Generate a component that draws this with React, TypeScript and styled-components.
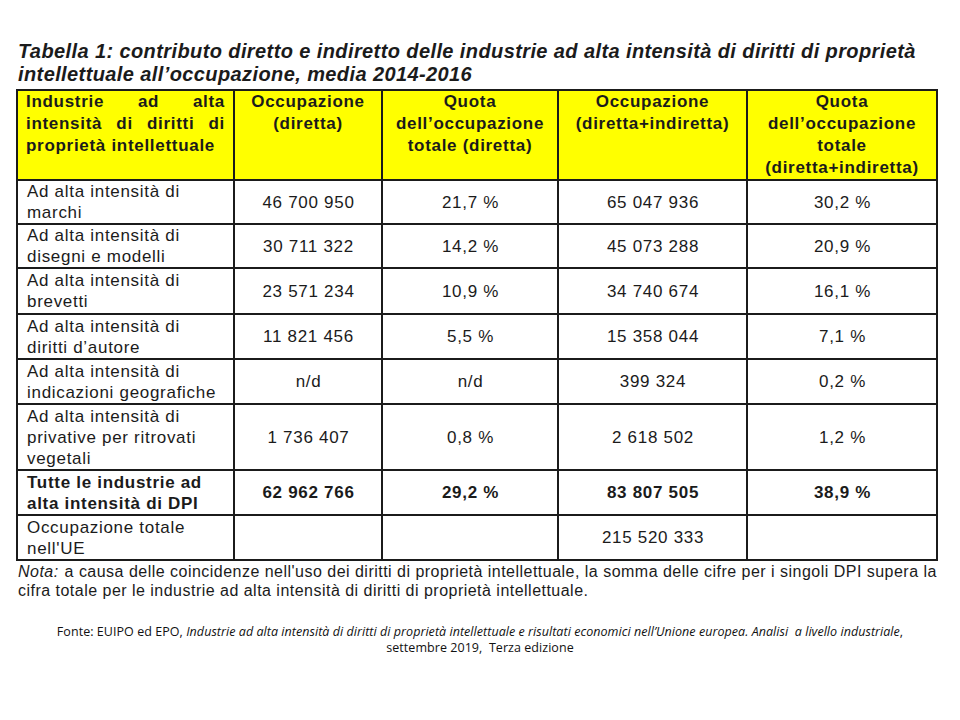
import styled, { createGlobalStyle } from 'styled-components';

const GlobalStyle = createGlobalStyle`
  html, body {
    margin: 0;
    padding: 0;
    background: #ffffff;
  }
`;

interface Row {
  label: string;
  direct: string;
  directShare: string;
  total: string;
  totalShare: string;
  bold?: boolean;
}

const rows: Row[] = [
  { label: "Ad alta intensità di marchi", direct: "46 700 950", directShare: "21,7 %", total: "65 047 936", totalShare: "30,2 %" },
  { label: "Ad alta intensità di disegni e modelli", direct: "30 711 322", directShare: "14,2 %", total: "45 073 288", totalShare: "20,9 %" },
  { label: "Ad alta intensità di brevetti", direct: "23 571 234", directShare: "10,9 %", total: "34 740 674", totalShare: "16,1 %" },
  { label: "Ad alta intensità di diritti d’autore", direct: "11 821 456", directShare: "5,5 %", total: "15 358 044", totalShare: "7,1 %" },
  { label: "Ad alta intensità di indicazioni geografiche", direct: "n/d", directShare: "n/d", total: "399 324", totalShare: "0,2 %" },
  { label: "Ad alta intensità di privative per ritrovati vegetali", direct: "1 736 407", directShare: "0,8 %", total: "2 618 502", totalShare: "1,2 %" },
  { label: "Tutte le industrie ad alta intensità di DPI", direct: "62 962 766", directShare: "29,2 %", total: "83 807 505", totalShare: "38,9 %", bold: true },
  { label: "Occupazione totale nell'UE", direct: "", directShare: "", total: "215 520 333", totalShare: "" },
];

const rowHeights = [44, 44, 46, 45, 45, 66, 45, 45];

const Page = styled.div`
  width: 960px;
  height: 720px;
  box-sizing: border-box;
  padding: 40px 0 0 16px;
  font-family: "Liberation Sans", Arial, sans-serif;
  color: #1b1b1b;
`;

const Title = styled.h1`
  margin: 0 0 3px 2px;
  font-size: 20px;
  line-height: 23px;
  font-weight: 700;
  font-style: italic;
  letter-spacing: 0.4px;
  white-space: nowrap;
`;

const Table = styled.table`
  border-collapse: collapse;
  table-layout: fixed;
  width: 920px;
  font-size: 17px;
  letter-spacing: 0.7px;
`;

const HeadCell = styled.th<{ $justify?: boolean }>`
  background: #ffff00;
  border: 2px solid #1b1b1b;
  height: 89px;
  box-sizing: border-box;
  vertical-align: top;
  padding: 0 8px;
  font-weight: 700;
  line-height: 22px;
  text-align: ${p => (p.$justify ? 'justify' : 'center')};
  text-align-last: ${p => (p.$justify ? 'left' : 'center')};
`;

const Cell = styled.td<{ $label?: boolean; $bold?: boolean }>`
  border: 2px solid #1b1b1b;
  box-sizing: border-box;
  padding: 0 8px 0 9px;
  line-height: 21px;
  font-weight: ${p => (p.$bold ? 700 : 400)};
  text-align: ${p => (p.$label ? 'left' : 'center')};
  vertical-align: middle;
`;

const Note = styled.p`
  margin: 1px 0 0 2px;
  width: 925px;
  font-size: 16px;
  line-height: 19px;
  letter-spacing: 0.48px;
`;

const NoteLabel = styled.i`
  margin-right: 1px;
`;

const Source = styled.p`
  margin: 24px 0 0 -16px;
  width: 960px;
  text-align: center;
  font-family: "Open Sans", "Liberation Sans", sans-serif;
  font-size: 12.5px;
  line-height: 16px;
  letter-spacing: 0.05px;
  color: #111;
`;

const App = () => {
  return (
    <>
      <GlobalStyle />
      <Page>
        <Title>
          Tabella 1: contributo diretto e indiretto delle industrie ad alta intensità di diritti di proprietà
          <br />
          intellettuale all’occupazione, media 2014-2016
        </Title>
        <Table>
          <colgroup>
            <col style={{ width: 217 }} />
            <col style={{ width: 148 }} />
            <col style={{ width: 176 }} />
            <col style={{ width: 189 }} />
            <col style={{ width: 190 }} />
          </colgroup>
          <thead>
            <tr>
              <HeadCell $justify>Industrie ad alta intensità di diritti di proprietà intellettuale</HeadCell>
              <HeadCell>Occupazione (diretta)</HeadCell>
              <HeadCell>Quota dell’occupazione totale (diretta)</HeadCell>
              <HeadCell>Occupazione (diretta+indiretta)</HeadCell>
              <HeadCell>Quota dell’occupazione totale (diretta+indiretta)</HeadCell>
            </tr>
          </thead>
          <tbody>
            {rows.map((row, i) => (
              <tr key={i} style={{ height: rowHeights[i] }}>
                <Cell $label $bold={row.bold}>{row.label}</Cell>
                <Cell $bold={row.bold}>{row.direct}</Cell>
                <Cell $bold={row.bold}>{row.directShare}</Cell>
                <Cell $bold={row.bold}>{row.total}</Cell>
                <Cell $bold={row.bold}>{row.totalShare}</Cell>
              </tr>
            ))}
          </tbody>
        </Table>
        <Note>
          <NoteLabel>Nota:</NoteLabel> a causa delle coincidenze nell'uso dei diritti di proprietà intellettuale, la somma delle cifre per i singoli DPI supera la
          cifra totale per le industrie ad alta intensità di diritti di proprietà intellettuale.
        </Note>
        <Source>
          Fonte: EUIPO ed EPO, <i>Industrie ad alta intensità di diritti di proprietà intellettuale e risultati economici nell’Unione europea. Analisi&nbsp; a livello industriale</i>,
          <br />
          settembre 2019,&nbsp; Terza edizione
        </Source>
      </Page>
    </>
  );
};

export default App;
